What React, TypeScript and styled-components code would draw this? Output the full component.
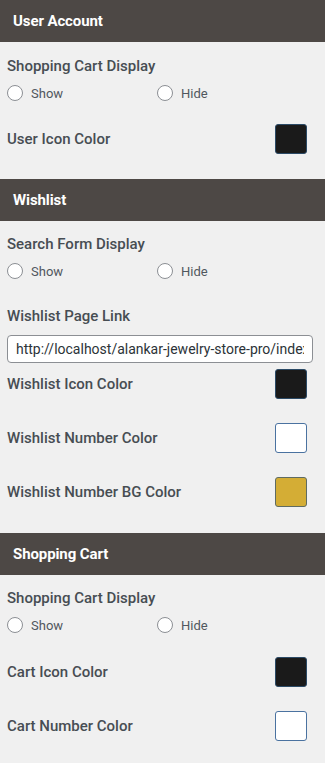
import React from "react";
import styled, { createGlobalStyle } from "styled-components";

const GlobalStyle = createGlobalStyle`
  html, body {
    margin: 0;
    padding: 0;
    background: #f0f0f0;
  }
  body {
    font-family: Roboto, "Noto Sans", "Liberation Sans", sans-serif;
  }
`;

const Panel = styled.div`
  width: 325px;
  background: #f0f0f0;
`;

const SectionHeader = styled.div`
  height: 42px;
  display: flex;
  align-items: center;
  padding-left: 13px;
  background: #4d4845;
  color: #ffffff;
  font-size: 15px;
  font-weight: 700;
  letter-spacing: -0.1px;
`;

const SectionBody = styled.div<{ $top: number; $bottom: number }>`
  display: flex;
  flex-direction: column;
  padding: ${(p) => p.$top}px 18px ${(p) => p.$bottom}px 7px;
`;

const Field = styled.div<{ $top?: number }>`
  display: flex;
  flex-direction: column;
  margin-top: ${(p) => p.$top || 0}px;
`;

const FieldLabel = styled.div`
  font-size: 15px;
  line-height: 20px;
  font-weight: 500;
  color: #474d53;
`;

const RadioRow = styled.div`
  display: grid;
  grid-template-columns: 150px auto;
  margin-top: 7px;
  height: 20px;
`;

const RadioOption = styled.label`
  display: flex;
  align-items: center;
  gap: 8px;
  font-size: 13px;
  color: #50575e;
`;

const RadioCircle = styled.span`
  width: 16px;
  height: 16px;
  box-sizing: border-box;
  border-radius: 50%;
  border: 1px solid #8c8f94;
  background: #ffffff;
`;

const ColorRow = styled.div<{ $top: number }>`
  display: flex;
  align-items: center;
  justify-content: space-between;
  height: 30px;
  margin-top: ${(p) => p.$top}px;
`;

const Swatch = styled.span<{ $fill: string; $edge: string }>`
  width: 32px;
  height: 30px;
  box-sizing: border-box;
  border-radius: 3px;
  background: ${(p) => p.$fill};
  border: 1px solid ${(p) => p.$edge};
`;

const LinkInput = styled.input`
  margin-top: 9px;
  width: 306px;
  height: 28px;
  box-sizing: border-box;
  padding: 0 8px;
  border: 1px solid #8c8f94;
  border-radius: 4px;
  background: #ffffff;
  font-family: Roboto, "Noto Sans", "Liberation Sans", sans-serif;
  font-size: 14px;
  color: #2c3338;
  outline: none;
`;

const BLACK = { fill: "#1a1a1a", edge: "#2b4a66" };
const WHITE = { fill: "#ffffff", edge: "#4a72a0" };
const GOLD = { fill: "#d4ad35", edge: "#5f6b62" };

const DisplayField = ({ label }: { label: string }) => (
  <Field>
    <FieldLabel>{label}</FieldLabel>
    <RadioRow>
      <RadioOption>
        <RadioCircle />
        Show
      </RadioOption>
      <RadioOption>
        <RadioCircle />
        Hide
      </RadioOption>
    </RadioRow>
  </Field>
);

const ColorField = ({
  label,
  top,
  color,
}: {
  label: string;
  top: number;
  color: { fill: string; edge: string };
}) => (
  <ColorRow $top={top}>
    <FieldLabel>{label}</FieldLabel>
    <Swatch $fill={color.fill} $edge={color.edge} />
  </ColorRow>
);

export default function App() {
  return (
    <Panel>
      <GlobalStyle />

      <SectionHeader>User Account</SectionHeader>
      <SectionBody $top={14} $bottom={25}>
        <DisplayField label="Shopping Cart Display" />
        <ColorField label="User Icon Color" top={21} color={BLACK} />
      </SectionBody>

      <SectionHeader>Wishlist</SectionHeader>
      <SectionBody $top={13} $bottom={26}>
        <DisplayField label="Search Form Display" />
        <Field $top={25}>
          <FieldLabel>Wishlist Page Link</FieldLabel>
          <LinkInput
            readOnly
            value="http://localhost/alankar-jewelry-store-pro/index.php/wishlist/"
          />
        </Field>
        <ColorField label="Wishlist Icon Color" top={6} color={BLACK} />
        <ColorField label="Wishlist Number Color" top={24} color={WHITE} />
        <ColorField label="Wishlist Number BG Color" top={24} color={GOLD} />
      </SectionBody>

      <SectionHeader>Shopping Cart</SectionHeader>
      <SectionBody $top={13} $bottom={25}>
        <DisplayField label="Shopping Cart Display" />
        <ColorField label="Cart Icon Color" top={22} color={BLACK} />
        <ColorField label="Cart Number Color" top={24} color={WHITE} />
      </SectionBody>
    </Panel>
  );
}
